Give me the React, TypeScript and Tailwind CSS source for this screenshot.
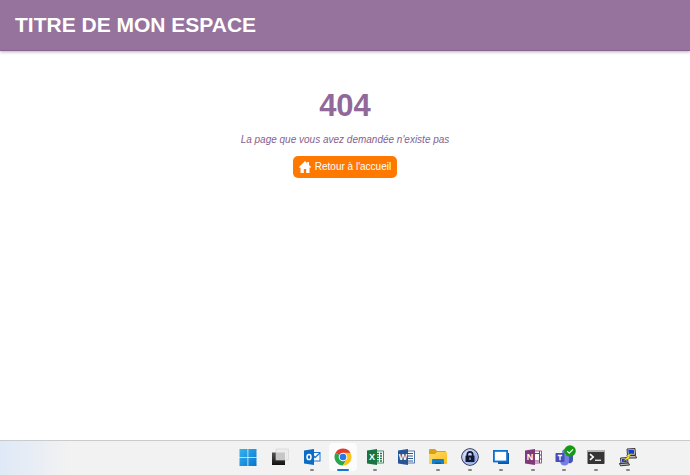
import React from 'react';

const box = 'block h-5 w-5 shrink-0';

function WindowsIcon() {
  return (
    <svg viewBox="0 0 20 20" className={box} aria-hidden="true">
      <defs>
        <linearGradient id="win" x1="0" y1="0" x2="1" y2="1">
          <stop offset="0" stopColor="#35b4ee" />
          <stop offset="1" stopColor="#0873cf" />
        </linearGradient>
      </defs>
      <path fill="url(#win)" d="M1.500 2h8v8h-8zM10.300 2h8.200v8h-8.200zM1.500 10.800h8V19h-8zM10.300 10.800h8.200V19h-8.200z" />
    </svg>
  );
}

function TaskViewIcon() {
  return (
    <svg viewBox="0 0 20 20" className={box} aria-hidden="true">
      <defs>
        <linearGradient id="tv" x1="0" y1="0" x2="0" y2="1">
          <stop offset="0" stopColor="#555" />
          <stop offset="1" stopColor="#111" />
        </linearGradient>
      </defs>
      <rect x="2" y="5.500" width="13" height="12.500" fill="url(#tv)" />
      <rect x="6" y="2" width="12.500" height="11" fill="#ececec" stroke="#d0d0d0" strokeWidth=".6" />
      <rect x="6" y="5.500" width="9" height="7.500" fill="#c6c6c6" />
    </svg>
  );
}

function OutlookIcon() {
  return (
    <svg viewBox="0 0 20 20" className={box} aria-hidden="true">
      <rect x="10" y="5.500" width="8" height="8.500" fill="#fff" stroke="#1976d2" />
      <path d="M10.500 7.500l2.500 3 5-4.500" fill="none" stroke="#1976d2" strokeWidth="1.300" />
      <path d="M2 3.500L12 2v16L2 16.500z" fill="#0a6cc4" />
      <ellipse cx="7" cy="10" rx="2" ry="2.600" fill="none" stroke="#fff" strokeWidth="1.500" />
    </svg>
  );
}

function ChromeIcon() {
  return (
    <svg viewBox="0 0 20 20" className={box} aria-hidden="true">
      <path d="M10 10L2.600 5.700A8.600 8.600 0 0 1 17.400 5.700z" fill="#e33b2e" />
      <path d="M10 10L2.600 5.700A8.600 8.600 0 0 0 10 18.600l3.700-6.500z" fill="#29a64b" />
      <path d="M10 5.700h7.400A8.600 8.600 0 0 1 10 18.600l3.700-6.500z" fill="#fcc31b" />
      <circle cx="10" cy="10" r="4.300" fill="#fff" />
      <circle cx="10" cy="10" r="3.300" fill="#2b78e4" />
    </svg>
  );
}

function OfficeIcon({ letter, color }: { letter: string; color: string }) {
  return (
    <svg viewBox="0 0 20 20" className={box} aria-hidden="true">
      <rect x="10" y="4" width="8.500" height="12" fill="#fff" stroke={color} strokeWidth=".8" />
      {letter === 'X' && (
        <path d="M12 6.500h2M15 6.500h2M12 9h2M15 9h2M12 11.500h2M15 11.500h2M12 14h2M15 14h2" stroke={color} strokeWidth="1.400" />
      )}
      {letter === 'W' && <path d="M11 6.500h6M11 9h6M11 11.500h6M11 14h6" stroke={color} strokeWidth="1" />}
      {letter === 'N' && <path d="M12 6.500h4M12 14h4M16.500 4v12M16.500 8h2M16.500 12h2" stroke={color} strokeWidth="1" />}
      <path d="M2 3.500L12 2v16L2 16.500z" fill={color} />
      <text x="7" y="13.300" textAnchor="middle" fontSize="9" fontWeight="700" fill="#fff" fontFamily="Liberation Sans, Arial, sans-serif">
        {letter}
      </text>
    </svg>
  );
}

function FolderIcon() {
  return (
    <svg viewBox="0 0 20 20" className={box} aria-hidden="true">
      <defs>
        <linearGradient id="fold" x1="0" y1="0" x2="1" y2="1">
          <stop offset="0" stopColor="#ffdc62" />
          <stop offset="1" stopColor="#f9bd24" />
        </linearGradient>
      </defs>
      <path d="M1 3q0-1 1-1h5l2 2h8q1 0 1 1v3H1z" fill="#dca016" />
      <path d="M1 7h6l2-2h9q1 0 1 1v10q0 1-1 1H2q-1 0-1-1z" fill="url(#fold)" />
      <path d="M4 17v-4q0-1 1-1h10q1 0 1 1v4z" fill="#167fc9" />
      <path d="M7 17v-1.500h6V17" fill="#0b5d9d" />
    </svg>
  );
}

function LockIcon() {
  return (
    <svg viewBox="0 0 20 20" className={box} aria-hidden="true">
      <defs>
        <linearGradient id="lock" x1="0" y1="0" x2="1" y2="1">
          <stop offset="0" stopColor="#fff" />
          <stop offset="1" stopColor="#6687e5" />
        </linearGradient>
      </defs>
      <circle cx="10" cy="10" r="8.300" fill="url(#lock)" stroke="#202b4d" strokeWidth="1" />
      <circle cx="10" cy="10" r="7.200" fill="none" stroke="#b9c5f4" />
      <path d="M7.300 9V7.500a2.700 2.700 0 0 1 5.400 0V9" fill="none" stroke="#10182e" strokeWidth="1.700" />
      <rect x="5.500" y="8.500" width="9" height="6.500" rx=".6" fill="#10182e" />
      <path d="M10 10.500v2.500" stroke="#9cb1f3" strokeWidth="1.200" />
    </svg>
  );
}

function RemoteIcon() {
  return (
    <svg viewBox="0 0 20 20" className={box} aria-hidden="true">
      <path d="M7 6h11v11H7z" fill="#0756aa" />
      <rect x="2.900" y="3.900" width="13.200" height="10.600" fill="#fff" stroke="#0871d1" strokeWidth="1.800" />
    </svg>
  );
}

function TeamsIcon() {
  return (
    <svg viewBox="0 0 20 20" className={box} aria-hidden="true">
      <circle cx="11" cy="5" r="2.800" fill="#6b75d8" />
      <path d="M13 8h6v5a3.500 3.500 0 0 1-5 3z" fill="#4453b8" />
      <path d="M6 8h9v6a4.500 4.500 0 0 1-9 0z" fill="#7680e4" />
      <rect x="1.500" y="6" width="9" height="9" rx=".7" fill="#464fb8" />
      <path d="M3.800 8.500h4.400M6 8.500v4.700" stroke="#fff" strokeWidth="1.300" />
    </svg>
  );
}

function TerminalIcon() {
  return (
    <svg viewBox="0 0 20 20" className={box} aria-hidden="true">
      <rect x="1.500" y="3" width="17" height="14" rx=".8" fill="#353535" />
      <path d="M1.500 5V3.800q0-.8.8-.8h15.400q.8 0 .8.800V5z" fill="#b5b5b5" />
      <path d="M4 7.200L7.200 10 4 12.800" fill="none" stroke="#fff" strokeWidth="1.600" />
      <path d="M9 13.300h6" stroke="#ddd" strokeWidth="1.400" />
    </svg>
  );
}

function PuttyIcon() {
  return (
    <svg viewBox="0 0 20 20" className={box} aria-hidden="true">
      <g stroke="#222" strokeWidth=".9">
        <path d="M9 2l8-.5.500 6.500-8 .5z" fill="#d5d5cc" />
        <path d="M9 8.500h8.500l1 2.500H10z" fill="#bbb" />
        <path d="M2.500 11l7-.5.500 5.500-7 .5z" fill="#d5d5cc" />
        <path d="M1.500 16.500l9-.5 1 2-9 .8z" fill="#bbb" />
      </g>
      <path d="M10.300 3l5.500-.3.400 4-5.500.4zM3.800 12.100l4.600-.3.400 3.100-4.600.4z" fill="#1737dd" />
      <path d="M14.500 6l-6 2.500 1 1.200-4.500 4.500 7-3-1-1.500z" fill="#ffef22" stroke="#61590b" strokeWidth=".4" />
    </svg>
  );
}

type App = { name: string; icon: React.ReactNode; running?: boolean; active?: boolean; available?: boolean };

const apps: App[] = [
  { name: 'Démarrer', icon: <WindowsIcon /> },
  { name: 'Vue des tâches', icon: <TaskViewIcon /> },
  { name: 'Outlook', icon: <OutlookIcon />, running: true },
  { name: 'Chrome', icon: <ChromeIcon />, active: true },
  { name: 'Excel', icon: <OfficeIcon letter="X" color="#187441" />, running: true },
  { name: 'Word', icon: <OfficeIcon letter="W" color="#285596" /> },
  { name: 'Explorateur de fichiers', icon: <FolderIcon />, running: true },
  { name: 'Mots de passe', icon: <LockIcon />, running: true },
  { name: 'Bureau à distance', icon: <RemoteIcon />, running: true },
  { name: 'OneNote', icon: <OfficeIcon letter="N" color="#80397b" />, running: true },
  { name: 'Teams', icon: <TeamsIcon />, running: true, available: true },
  { name: 'Terminal', icon: <TerminalIcon />, running: true },
  { name: 'PuTTY', icon: <PuttyIcon />, running: true },
];

function Taskbar() {
  return (
    <nav
      aria-label="Barre des tâches"
      className="flex justify-center border-t border-[#c9cccf] bg-linear-to-r from-[#dfe9f7] via-[#f2f2f2] via-10% to-[#f2f2f2] pl-[186px]"
    >
      <div className="grid w-[411px] grid-cols-13 pt-0.5 pb-1">
        {apps.map((app) => (
          <button
            key={app.name}
            type="button"
            aria-label={app.name}
            className={
              app.active
                ? 'relative mx-0.5 flex h-7 flex-col items-center justify-between rounded-sm bg-white/80 pt-1'
                : 'relative mx-0.5 flex h-7 flex-col items-center justify-between rounded-sm pt-1'
            }
          >
            {app.icon}
            {app.active && <span className="h-0.5 w-3 rounded-full bg-[#1674d1]" />}
            {app.running && <span className="h-0.5 w-1 rounded-full bg-[#858585]" />}
            {app.available && (
              <svg viewBox="0 0 12 12" className="absolute top-0.5 right-0.5 h-3 w-3" aria-hidden="true">
                <circle cx="6" cy="6" r="5.800" fill="#139b16" />
                <path d="M3.200 6.200l2 2L9 4.300" fill="none" stroke="#fff" strokeWidth="1.200" />
              </svg>
            )}
          </button>
        ))}
      </div>
    </nav>
  );
}

export default function App() {
  return (
    <div className="flex min-h-screen flex-col bg-white font-['Liberation_Sans',Arial,sans-serif]">
      <header className="border-b border-[#8a6292] bg-[#96739c] px-[15px] py-[11px] shadow-[0_1px_3px_rgba(80,50,90,0.4)]">
        <h1 className="text-[21px] leading-7 font-bold text-white">TITRE DE MON ESPACE</h1>
      </header>
      <main className="flex flex-1 flex-col items-center pt-[35px] text-[#85628f]">
        <h2 className="text-[31px] leading-10 font-bold text-[#91689a]">404</h2>
        <p className="mt-1.5 text-[10px] leading-4 italic">La page que vous avez demandée n'existe pas</p>
        <a
          href="#accueil"
          className="mt-2 flex h-[22px] items-center gap-1 rounded-[5px] bg-[#ff7900] px-1.5 text-[10px] leading-4 text-white"
        >
          <svg viewBox="0 0 12 12" className="h-3 w-3" fill="currentColor" aria-hidden="true">
            <path d="M6 0L0 6l.8.900L1.500 6.300V12h3.300V8h2.400v4h3.300V6.300l.7.600L12 6l-2-2V1H8.200v1.200z" />
          </svg>
          Retour à l'accueil
        </a>
      </main>
      <Taskbar />
    </div>
  );
}
